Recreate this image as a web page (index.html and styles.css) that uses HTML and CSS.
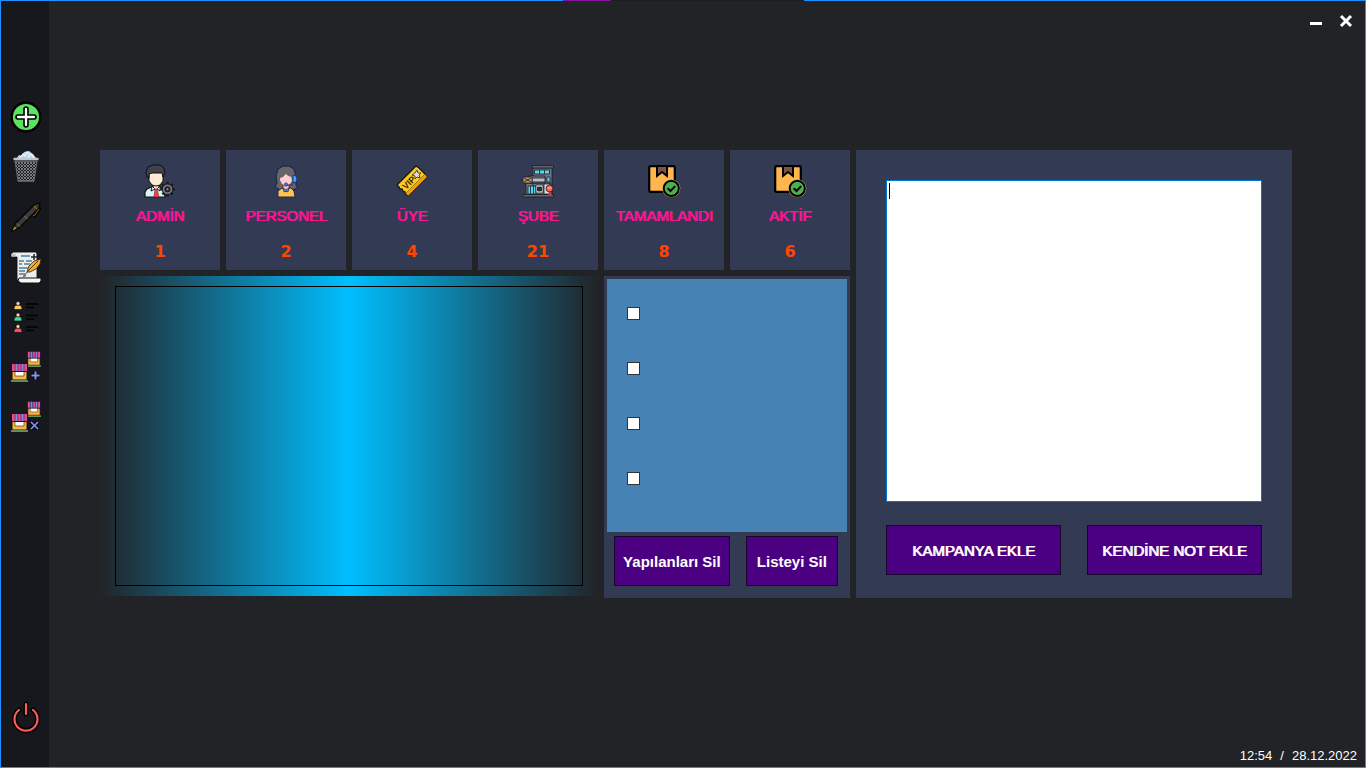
FILE: index.html
```html
<!DOCTYPE html>
<html lang="tr">
<head>
<meta charset="utf-8">
<meta name="viewport" content="width=device-width, initial-scale=1">
<title>Yönetim Paneli</title>
<link rel="stylesheet" href="styles.css">
</head>
<body>
<svg class="defs" width="0" height="0" aria-hidden="true">
  <defs>
    <pattern id="mesh" width="3" height="3" patternUnits="userSpaceOnUse">
      <rect width="3" height="3" fill="#1d1e22"/>
      <path d="M0 0L3 3M3 0L0 3" stroke="#8f9196" stroke-width=".8"/>
    </pattern>
    <g id="stall">
      <path d="M1 8h15v9H1z" fill="#ffb340" stroke="#101016"/>
      <path d="M4 8h9v5H4z" fill="#fff" stroke="#222" stroke-width=".6"/>
      <path d="M0 18h17" stroke="#8fe08f" stroke-width="1.200"/>
      <path d="M1 0h15l1 3v6H0V3z" fill="#15122c"/>
      <path d="M1 1h3v7H1zM7 1h3v7H7zM13 1h3v7h-3z" fill="#e94b92"/>
      <path d="M4 1h3v7H4zM10 1h3v7h-3z" fill="#7f87df"/>
      <path d="M4 0v8M7 0v8M10 0v8M13 0v8" stroke="#15122c" stroke-width=".5"/>
    </g>
    <g id="stalls">
      <g transform="translate(17 0) scale(.82 .84)"><use href="#stall"/></g>
      <g transform="translate(1 12)"><use href="#stall"/></g>
    </g>
    <g id="parcel">
      <rect x="1.200" y="1.200" width="25.600" height="25.600" rx="1.500" fill="#ffb74d" stroke="#000" stroke-width="2.200"/>
      <path d="M9 1v10l5-4 5 4V1z" fill="#795548" stroke="#000" stroke-width="2"/>
      <circle cx="23.300" cy="23.300" r="9" fill="#ffb74d"/>
      <circle cx="23.300" cy="23.300" r="7.600" fill="#4caf50" stroke="#000" stroke-width="2"/>
      <path d="M19.700 23.200l2.800 2.800 4.700-4.900" fill="none" stroke="#000" stroke-width="2"/>
    </g>
  </defs>
</svg>
<div class="window">
  <div class="top-edge"></div>
  <nav class="sidebar" aria-label="Menü">
    <button class="nav-btn" aria-label="Ekle">
      <svg class="icon" viewBox="0 0 32 32"><circle cx="16" cy="16" r="14.300" fill="#5ae360" stroke="#000" stroke-width="2.400"/><path d="M16 8v16M8 16h16" stroke="#000" stroke-width="5.600" stroke-linecap="round"/><path d="M16 8v16M8 16h16" stroke="#fff" stroke-width="2.300" stroke-linecap="round"/></svg>
    </button>
    <button class="nav-btn" aria-label="Çöp kutusu">
      <svg class="icon" viewBox="0 0 32 32"><path d="M6 8l3-4 3 1 2-4 5-1 4 3 4 5z" fill="#b8d5f2"/><path d="M10 7l3-4 2 2 2-4 3 3-2 3M21 3l3 4" fill="none" stroke="#edf6ff" stroke-width="1.300"/><path d="M5 10h22l-3 20H8z" fill="url(#mesh)" stroke="#77797f" stroke-width=".8"/><path d="M3.500 8h25" stroke="#c5c6ca" stroke-width="2.400"/><path d="M4 10.500h24" stroke="#5b5d63"/><path d="M8 30h16" stroke="#777980"/></svg>
    </button>
    <button class="nav-btn" aria-label="Düzenle">
      <svg class="icon" viewBox="0 0 32 32"><path d="M2 30l4-8L25 3l5-1-1 5L10 26z" fill="#3b3b3c" stroke="#050505" stroke-width="1.300"/><path d="M2.500 29.500l2-4 2 2z" fill="#c28a2b"/><path d="M7 22.500l3 3M14.500 15l3 3M24 5l3 3" stroke="#a87a2b"/><path d="M29 7l1 1-5 7-2 1" fill="none" stroke="#050505" stroke-width="2.500"/><path d="M29 8l-4 6-2 1" fill="none" stroke="#8a6427"/></svg>
    </button>
    <button class="nav-btn" aria-label="Notlar">
      <svg class="icon" viewBox="0 0 32 32"><path d="M5 1h21l1 2v26H7V6H1V3l2-2z" fill="#eceded" stroke="#111" stroke-width=".9"/><path d="M1.500 2.500h4v3h-4z" fill="#bfc2c4"/><path d="M9 27h22v3l-2 2H11l-3-2z" fill="#f5f5f5" stroke="#111"/><path d="M11 5h9M9 10h5M16 10h6M9 13h3M14 13h6M9 17h9M9 20h6M9 23h6" stroke="#4a829a" stroke-width="1.400"/><path d="M24 3v6M21 6h6" stroke="#222" stroke-width="1.500"/><path d="M17 21l2-6 5-5 7-2-1 5-4 5-6 3z" fill="#f4a827" stroke="#30240d" stroke-width=".8"/><path d="M13 26l6-7 9-9" fill="none" stroke="#59401a"/><path d="M12.500 27l1.500-4 2.500 2z" fill="#687b87"/></svg>
    </button>
    <button class="nav-btn" aria-label="Personel listesi">
      <svg class="icon" viewBox="0 0 32 32"><g stroke="#000" stroke-width=".6"><path d="M4 8.500c0-4 2-4.500 4-4.500s4 .5 4 4.500z" fill="#f8ce57"/><circle cx="8" cy="2.500" r="2" fill="#fbd3bd"/><path d="M4 20c0-4 2-4.500 4-4.500s4 .5 4 4.500z" fill="#42d99a"/><circle cx="8" cy="14" r="2" fill="#fbd3bd"/><path d="M4 31.500c0-4 2-4.500 4-4.500s4 .5 4 4.500z" fill="#f34f5c"/><circle cx="8" cy="25.500" r="2" fill="#fbd3bd"/></g><path d="M16 3h12M16 6.500h8M16 14.500h12M16 18h8M16 26h12M16 29.500h8" stroke="#000" stroke-width="1.300"/></svg>
    </button>
    <button class="nav-btn" aria-label="Şube ekle">
      <svg class="icon" viewBox="0 0 32 32"><use href="#stalls"/><path d="M25.500 20v9M21 24.500h9" stroke="#05050d" stroke-width="4"/><path d="M25.500 20.500v8M21.500 24.500h8" stroke="#8791eb" stroke-width="2"/></svg>
    </button>
    <button class="nav-btn" aria-label="Şube sil">
      <svg class="icon" viewBox="0 0 32 32"><use href="#stalls"/><path d="M21 21l7 7M28 21l-7 7" stroke="#05050d" stroke-width="4"/><path d="M21 21l7 7M28 21l-7 7" stroke="#8791eb" stroke-width="1.700"/></svg>
    </button>
    <button class="nav-btn nav-btn-exit" aria-label="Çıkış">
      <svg class="icon" viewBox="0 0 32 32" fill="none" stroke-linecap="round"><path d="M9 9a11.500 11.500 0 1 0 14 0M16 3v10" stroke="#000" stroke-width="5"/><path d="M9 9a11.500 11.500 0 1 0 14 0M16 3v10" stroke="#ff5a5a" stroke-width="2.200"/></svg>
    </button>
  </nav>
  <div class="workspace">
    <header class="titlebar">
      <button class="win-btn" aria-label="Küçült"><svg class="win-icon" viewBox="0 0 16 16"><path d="M2 10.500h12" stroke="#fff" stroke-width="3"/></svg></button>
      <button class="win-btn" aria-label="Kapat"><svg class="win-icon" viewBox="0 0 16 16"><path d="M3 3l10 10M13 3L3 13" stroke="#fff" stroke-width="3"/></svg></button>
    </header>
    <main class="dashboard">
      <div class="overview">
        <section class="stats">
          <article class="stat">
            <svg class="icon" viewBox="0 0 32 32"><path d="M1 32v-5l2-3 7-3h4l6 3 1 8z" fill="#d7f4fb" stroke="#101217" stroke-width="1.200"/><path d="M9 18v4l3 3 3-3v-4z" fill="#ffdfc4" stroke="#101217"/><path d="M5 9v7l3 4 4 1 4-1 3-4V8l-3-3H8z" fill="#ffebd4" stroke="#101217"/><path d="M3 12l-1-5 2-5 5-2h7l4 3 1 5-2 4-1-4H8l-3 1v4z" fill="#40434b" stroke="#0c0d10"/><path d="M11 24h2l2 8h-5z" fill="#f44343" stroke="#8d1d25" stroke-width=".6"/><path d="M8 22l-1 4 4-2M16 22v4l-3-2" fill="#fff" stroke="#15171c"/><path d="M23.500 17v14.500M16.300 24.300h14.500M18.400 19.200l10.200 10.200M28.600 19.200l-10.200 10.200" stroke="#16171a" stroke-width="2.500"/><circle cx="23.500" cy="24.300" r="5.300" fill="#77787b" stroke="#16171a"/><circle cx="23.500" cy="24.300" r="2.600" fill="#35373d" stroke="#111"/><circle cx="23.500" cy="24.300" r=".8" fill="#aaa"/></svg>
            <h2 class="stat-label">ADMİN</h2><p class="stat-value">1</p>
          </article>
          <article class="stat">
            <svg class="icon" viewBox="0 0 32 32"><path d="M6 11l2-7 5-3h6l5 3 2 7v9l2 3-6 2H10l-5-3 2-4z" fill="#666668" stroke="#242951" stroke-width="1.300"/><path d="M8 32v-6l4-3h9l3 3 1 6z" fill="#ffc34f" stroke="#242951"/><path d="M13 20h6v4l-3 3-3-3z" fill="#ffb5b5" stroke="#242951" stroke-width=".7"/><path d="M10 12l5-3 6 2 1 5-3 4-3 1-4-2-2-4z" fill="#ffcfcf"/><path d="M9 13c3 0 6-2 7-5 1 3 4 4 7 4V8l-3-5h-8L9 7z" fill="#666668"/><path d="M23 10l3 1 1 3-1 3-3 1z" fill="#3fa4ff" stroke="#1c3979"/><path d="M24 17l-2 3h-5" fill="none" stroke="#283164"/><circle cx="16" cy="19.500" r="1.600" fill="#337fd5" stroke="#232a5c" stroke-width=".7"/><path d="M13 23l3 2 3-2-1 4-2-1-2 1z" fill="#4492e6" stroke="#242951" stroke-width=".7"/></svg>
            <h2 class="stat-label">PERSONEL</h2><p class="stat-value">2</p>
          </article>
          <article class="stat">
            <svg class="icon" viewBox="0 0 32 32"><path d="M1 20L20 1l3 2 1 1 2 2 2 2 1 1 2 3L12 31l-3-2v-2l-2-1-1-2-2 0-1-2z" fill="#ffc91f" stroke="#171717" stroke-width="1.300"/><path d="M10 28L29 9l2 3-19 19z" fill="#f1a20b" stroke="#493814" stroke-width=".5"/><text x="10" y="25" transform="rotate(-45 10 25)" class="ticket-text">VIP</text><path d="M21 5l1 3 3 0-2 2 1 3-3-1-2 2v-3l-3-1 3-2z" fill="#ddd" stroke="#272727" stroke-width=".8"/></svg>
            <h2 class="stat-label">ÜYE</h2><p class="stat-value">4</p>
          </article>
          <article class="stat">
            <svg class="icon" viewBox="0 0 32 32"><g stroke="#191b22" stroke-width=".8"><path d="M11 3h19v27H11zM4 18h25v12H4z" fill="#737781"/><path d="M10 .5h21.500V3H10zM1 29.500h30.500V32H1z" fill="#63666f"/><path d="M12.500 5h15v4h-15z" fill="#58d4ef"/><path d="M17.500 5v4M22.500 5v4"/><path d="M7 11h16v7H7z" fill="#777b85"/><path d="M10 13h13v4H10z" fill="#b6bbc7"/><rect x="1" y="12" width="9" height="6" rx="1" fill="#c99561"/><path d="M2 13l7 4M2 17l7-4" fill="none"/><path d="M25 12h3v5h-3zM6 21h8v8H6z" fill="#58d4ef"/><path d="M8.500 21v8M11.500 21v8"/><path d="M14 20h7v8h-7z" fill="#eee"/><path d="M15.500 22h4v4h-4z" fill="#293040"/><path d="M22 19h6v10h-6z" fill="#dfe0e5"/><circle cx="27.500" cy="23.500" r="3.500" fill="#ec6a5c"/></g><path d="M25.500 23h4" stroke="#ffc1b4"/><path d="M26 30l1-3h2l1 3z" fill="#b73e3a"/></svg>
            <h2 class="stat-label">ŞUBE</h2><p class="stat-value">21</p>
          </article>
          <article class="stat">
            <svg class="icon" viewBox="0 0 32 32"><use href="#parcel"/></svg>
            <h2 class="stat-label">TAMAMLANDI</h2><p class="stat-value">8</p>
          </article>
          <article class="stat">
            <svg class="icon" viewBox="0 0 32 32"><use href="#parcel"/></svg>
            <h2 class="stat-label">AKTİF</h2><p class="stat-value">6</p>
          </article>
        </section>
        <section class="glow"><div class="glow-frame"></div></section>
        <section class="todo">
          <div class="todo-list">
            <input class="check" type="checkbox" aria-label="Görev 1">
            <input class="check" type="checkbox" aria-label="Görev 2">
            <input class="check" type="checkbox" aria-label="Görev 3">
            <input class="check" type="checkbox" aria-label="Görev 4">
          </div>
          <div class="todo-actions">
            <button class="btn btn-done">Yapılanları Sil</button>
            <button class="btn btn-list">Listeyi Sil</button>
          </div>
        </section>
      </div>
      <section class="notes">
        <div class="note-box"><textarea class="note-input" aria-label="Not"></textarea></div>
        <div class="note-actions">
          <button class="btn btn-caps">KAMPANYA EKLE</button>
          <button class="btn btn-caps">KENDİNE NOT EKLE</button>
        </div>
      </section>
    </main>
    <footer class="clock"><time>12:54</time><span>/</span><time>28.12.2022</time></footer>
  </div>
</div>
</body>
</html>
```

FILE: styles.css
```css
* { box-sizing: border-box; }
body {
  margin: 0;
  background: #222327;
  color: #fff;
  font-family: "Liberation Sans", Arial, sans-serif;
}
h2, p { margin: 0; }
button { font: inherit; color: inherit; padding: 0; border: 0; background: none; }
.defs { position: absolute; }

.window {
  display: grid;
  grid-template: 1px 1fr / 48px 1fr;
  min-height: 100vh;
  border: 1px solid #1e90ff;
  border-top: 0;
}
.top-edge {
  grid-column: 1 / -1;
  background: linear-gradient(90deg, #1e90ff 41.2%, #86149a 41.2% 44.7%, #1d1e20 44.7% 58.9%, #1e90ff 58.9%);
}

.sidebar {
  display: flex;
  flex-direction: column;
  padding: 91px 0 25px 2px;
  background: #17181d;
}
.nav-btn { display: grid; place-items: center; height: 50px; }
.nav-btn-exit { margin-top: auto; }
.icon { display: block; width: 32px; height: 32px; overflow: visible; }

.workspace { display: flex; flex-direction: column; }
.titlebar { display: flex; justify-content: flex-end; padding: 5px 4px 0 0; }
.win-btn { display: grid; place-items: center; width: 30px; height: 30px; }
.win-icon { display: block; width: 16px; height: 16px; }

.dashboard {
  display: grid;
  grid-template-columns: 750fr 436fr;
  gap: 6px;
  padding: 114px 73px 32px 51px;
}
.overview {
  display: grid;
  grid-template-columns: repeat(6, 1fr);
  gap: 6px;
}
.stats {
  grid-column: 1 / -1;
  display: grid;
  grid-template-columns: subgrid;
}
.stat {
  display: flex;
  flex-direction: column;
  align-items: center;
  padding: 15px 0 8px;
  background: #333a53;
}
.stat-label {
  margin-top: 9px;
  color: #ff1493;
  font-size: 15px;
  font-weight: normal;
  line-height: 20px;
  text-shadow: 1px 0 currentColor;
}
.stat-value {
  margin-top: 16px;
  color: #ff4500;
  font: bold 16px/20px "DejaVu Sans", sans-serif;
}
.ticket-text { font: bold 9px "Liberation Sans", sans-serif; fill: #3a2806; }

.glow {
  grid-column: span 4;
  margin-bottom: 2px;
  padding: 10px 15px;
  background: linear-gradient(90deg, #222327, #00bfff 50%, #222327);
}
.glow-frame { height: 100%; border: 1px solid #000; }

.todo { grid-column: span 2; padding: 3px 3px 12px; background: #333a53; }
.todo-list {
  display: flex;
  flex-direction: column;
  gap: 42px;
  padding: 28px 20px 47px;
  background: #4682b4;
}
.check {
  appearance: none;
  width: 13px;
  height: 13px;
  margin: 0;
  border: 1px solid #333;
  background: #fff;
}
.check:checked { background: #4b0082; }
.todo-actions { display: flex; gap: 16px; padding: 4px 9px 0 7px; }
.btn {
  flex: 1;
  height: 50px;
  border: 1px solid #18052b;
  background: #4b0082;
  font-size: 15px;
  font-weight: bold;
  white-space: nowrap;
}
.btn-done { flex: 116; }
.btn-list { flex: 92; }
.btn-caps { font-weight: normal; text-shadow: 1px 0 currentColor; }

.notes {
  display: flex;
  flex-direction: column;
  gap: 23px;
  padding: 30px 30px 23px;
  background: #333a53;
}
.note-box { position: relative; display: flex; flex: 1; }
.note-box::before {
  content: "";
  position: absolute;
  top: 3px;
  left: 3px;
  width: 1px;
  height: 16px;
  background: #000;
}
.note-box:focus-within::before { display: none; }
.note-input {
  width: 100%;
  padding: 2px;
  border: 1px solid #0078d7;
  border-radius: 0;
  outline: 0;
  background: #fff;
  resize: none;
  font: 14px/16px "Liberation Sans", sans-serif;
}
.note-actions { display: flex; gap: 26px; }

.clock {
  display: flex;
  justify-content: flex-end;
  gap: 8px;
  margin-top: auto;
  padding: 0 8px 1px 0;
  font-size: 13px;
  line-height: 20px;
}
```
